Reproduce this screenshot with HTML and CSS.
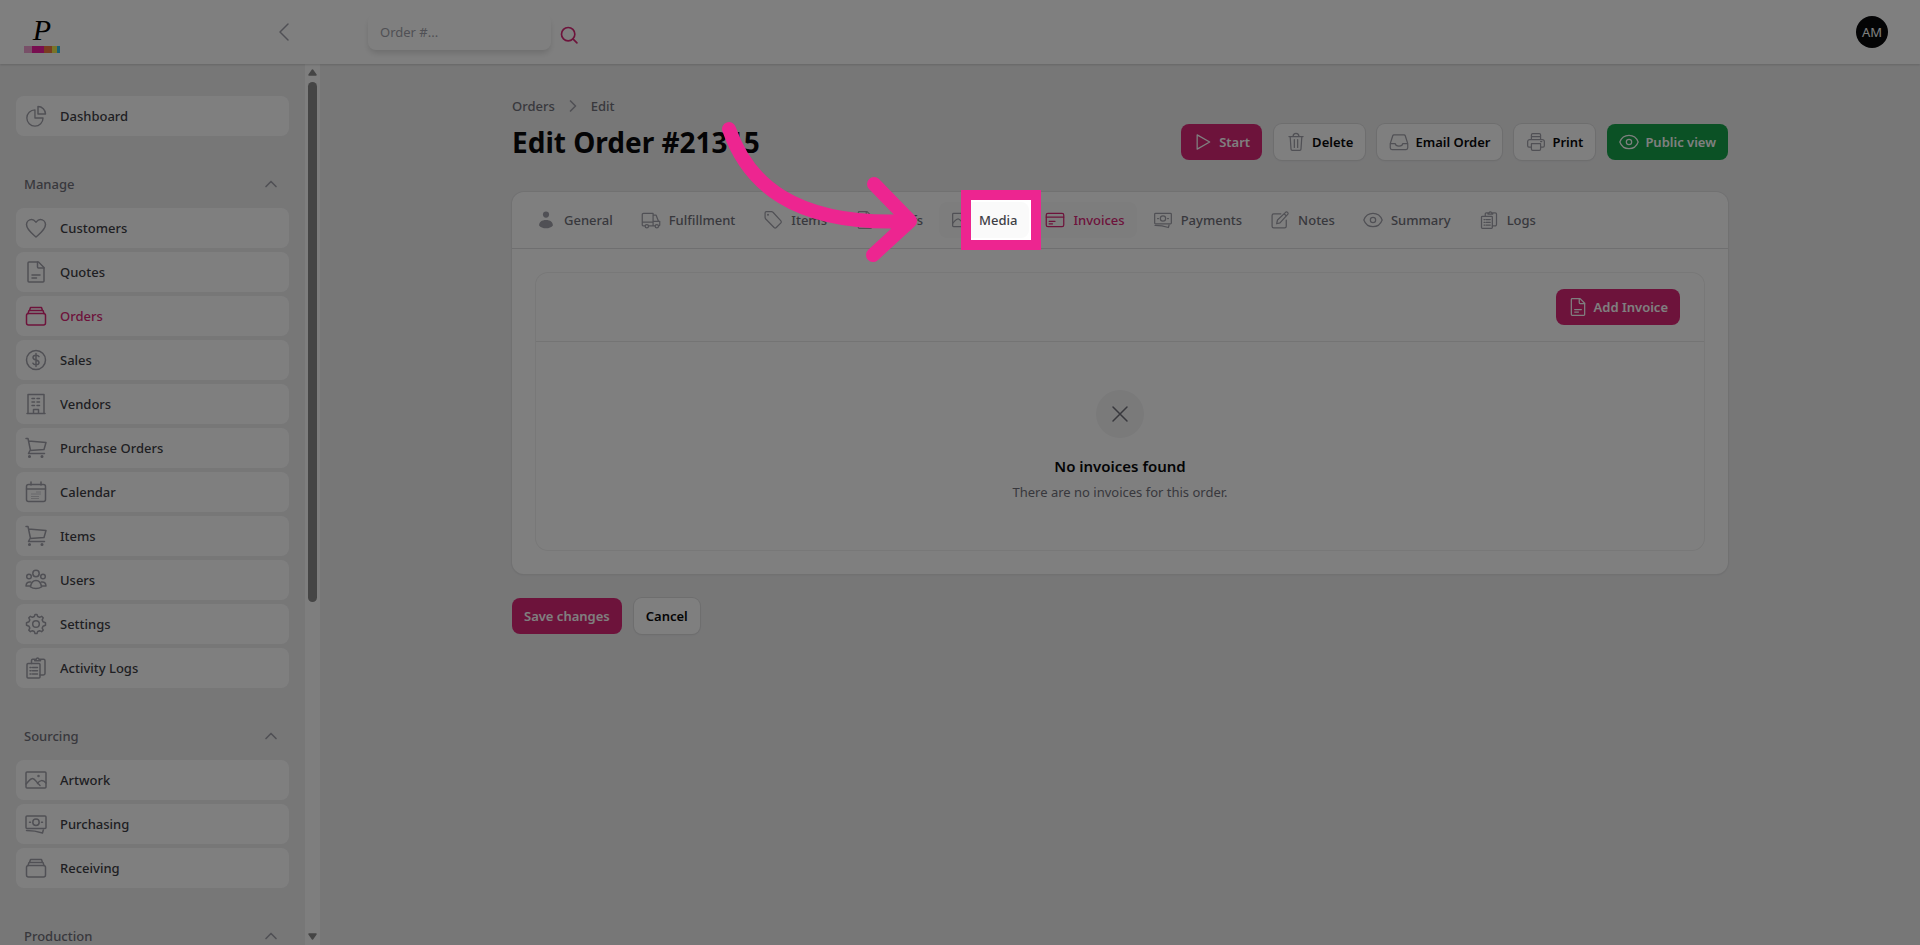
FILE: index.html
```html
<!DOCTYPE html>
<html lang="en">
<head>
    <meta charset="utf-8">
    <title>Edit Order #21315</title>
    <link rel="stylesheet" href="styles.css">
</head>
<body>
    <!-- icon set -->
    <svg class="sprite" aria-hidden="true">
        <symbol id="i-pie" viewBox="0 0 24 24"><path d="M10.500 4.500A9 9 0 1 0 19.500 13.500h-9z" transform="translate(1.500 1.800) scale(.9)"/><path d="M14 2.500v7.500h7.500A7.500 7.500 0 0 0 14 2.500z"/></symbol>
        <symbol id="i-heart" viewBox="0 0 24 24"><path d="M12 21C8 17.500 2.500 13.500 2.500 8.500A5.200 5.200 0 0 1 7.700 3.500C9.800 3.500 11 5 12 6.200 13 5 14.200 3.500 16.300 3.500a5.200 5.200 0 0 1 5.200 5c0 5-5.500 9-9.500 12.500z"/></symbol>
        <symbol id="i-doc" viewBox="0 0 24 24"><path d="M5 2h9.500L20 7.500V21a1 1 0 0 1-1 1H5a1 1 0 0 1-1-1V3a1 1 0 0 1 1-1z"/><path d="M13.500 2v5a1 1 0 0 0 1 1H20M8 15h8M8 18h4.500"/></symbol>
        <symbol id="i-stack" viewBox="0 0 24 24"><rect x="2.500" y="9.500" width="19" height="11.500" rx="2"/><path d="M4 9.500 5 6.500h14l1 3M5.500 6.500 6.500 3.500h11l1 3"/></symbol>
        <symbol id="i-dollar" viewBox="0 0 24 24"><circle cx="12" cy="12" r="9.500"/><path d="M15 8.700C14.500 7.700 13.500 7.200 12 7.200c-1.800 0-3 .9-3 2.300 0 3.300 6 1.700 6 5 0 1.400-1.200 2.300-3 2.300-1.500 0-2.600-.6-3.100-1.600M12 5.500v13"/></symbol>
        <symbol id="i-building" viewBox="0 0 24 24"><path d="M4 21.500V2.500h16v19M3 21.500h18M9.500 21.500V17.500h5v4M8 6.500h2.500M13 6.500h2.500M8 10h2.500M13 10h2.500M8 13.500h2.500M13 13.500h2.500"/></symbol>
        <symbol id="i-cart" viewBox="0 0 24 24"><path d="M2 2.500h2L6.500 14.500M4.500 5 22 6.500 20 13.500 6 14.500 4.500 17.500H20.500"/><circle cx="5.500" cy="20.500" r=".8"/><circle cx="18" cy="20.500" r=".8"/></symbol>
        <symbol id="i-calendar" viewBox="0 0 24 24"><rect x="2.500" y="4.500" width="19" height="17" rx="2"/><path d="M2.500 9h19M7 2v3M17 2v3"/><path d="M7.500 16.500h7M7.500 14h9.500M7.500 18.500h7M12.500 12h4.500" stroke-width="1" stroke-linecap="butt" stroke-dasharray="1 1"/></symbol>
        <symbol id="i-users" viewBox="0 0 24 24"><circle cx="12" cy="5.500" r="3.200"/><circle cx="5" cy="8.500" r="2.300"/><circle cx="19" cy="8.500" r="2.300"/><path d="M6.500 19c.5-4 2.500-6.500 5.500-6.500s5 2.500 5.500 6.500c-3 2-8 2-11 0zM6.500 14C4 13.500 2.200 15 2 18h4M17.500 14c2.500-.5 4.300 1 4.500 4h-4"/></symbol>
        <symbol id="i-gear" viewBox="0 0 24 24"><circle cx="12" cy="12" r="3.300"/><path d="M10.300 4.500 11 2.500h2l.7 2 1.900.8 2-1 1.600 1.600-1 2 .8 1.900 2.500.9v2.600l-2.500.9-.8 1.900 1 2-1.600 1.600-2-1-1.900.8-.7 2h-2l-.7-2-1.900-.8-2 1-1.600-1.600 1-2-.8-1.900-2.500-.9v-2.600l2.500-.9.8-1.900-1-2 1.600-1.600 2 1z"/></symbol>
        <symbol id="i-logs" viewBox="0 0 24 24"><rect x="3" y="7.500" width="13" height="14.500" rx="1"/><path d="M7.500 7.500V4.500a1.200 1.200 0 0 1 1.200-1.200h2M16.500 3.300h3A1.500 1.500 0 0 1 21 4.800v12.500a1.800 1.800 0 0 1-1.800 1.800H16M10.700 4.800V3.300h1.500c.5-1.600 2.300-1.600 2.800 0h1.500v1.500zM6 11.500h1M8.500 11.500h5M6 14.800h1M8.500 14.800h5M6 18h1M8.500 18h5"/></symbol>
        <symbol id="i-image" viewBox="0 0 24 24"><rect x="2" y="4" width="20" height="16" rx="1"/><path d="M2 16c3-3 4-5.500 6.500-5.500S12 14 16 17.500M13.500 15.500c2-3.500 5.500-4 8.500-.5"/><circle cx="14.500" cy="8" r=".5"/></symbol>
        <symbol id="i-cash" viewBox="0 0 24 24"><rect x="2" y="4" width="20" height="12.500" rx="1"/><circle cx="12" cy="10.200" r="3.200"/><path d="M5.500 10.200h1M17.500 10.200h1M2.500 18.500c6 0 10 .5 16 2.500l.8-3"/></symbol>
        <symbol id="i-user" viewBox="0 0 24 24"><circle cx="12" cy="5.500" r="3.700" fill="currentColor" stroke="none"/><path d="M3.700 18.500c0-4 3-6.500 8.300-6.500s8.300 2.500 8.300 6.500c-3 4.500-13.600 4.500-16.600 0z" fill="currentColor" stroke="none"/></symbol>
        <symbol id="i-truck" viewBox="0 0 24 24"><path d="M5 19H2.500a1 1 0 0 1-1-1V5.500a1.500 1.500 0 0 1 1.500-1.500h11.500v15H9M14.500 6h3.500l3 7.500h1.500V18a1 1 0 0 1-1 1M14.500 13.500H22M1.500 14.500h13M14.500 19H17"/><circle cx="7" cy="19.500" r="2"/><circle cx="19" cy="19.500" r="2"/></symbol>
        <symbol id="i-tag" viewBox="0 0 24 24"><path d="M2.500 3.500A1.500 1.500 0 0 1 4 2h6.500l1.500.7 9.500 10.300a2 2 0 0 1 0 2.500l-5.500 5.500a2 2 0 0 1-2.700 0L3 10.500l-.5-1.500z"/><circle cx="6" cy="5.700" r=".5"/></symbol>
        <symbol id="i-card" viewBox="0 0 24 24"><rect x="1.500" y="4" width="21" height="16" rx="2"/><path d="M1.500 8.500h21M5 13.500h7M5 16.500h4"/></symbol>
        <symbol id="i-edit" viewBox="0 0 24 24"><path d="M13 4.500H4.500A2 2 0 0 0 2.500 6.500v13a2 2 0 0 0 2 2h13a2 2 0 0 0 2-2V12M8 16.500l1-4.500L19 2.500c1.300-1 3.500 1 2.500 2.500L12 15.500zM17 4.500l2.500 2.500"/></symbol>
        <symbol id="i-eye" viewBox="0 0 24 24"><path d="M1 12C3 6.500 7 4 12 4S21 6.500 23 12C21 17.500 17 20 12 20S3 17.500 1 12z"/><circle cx="12" cy="12" r="3.200"/></symbol>
        <symbol id="i-play" viewBox="0 0 24 24"><path d="M5 3.500 20 12 5 20.500z"/></symbol>
        <symbol id="i-trash" viewBox="0 0 24 24"><path d="M3.500 5.500h17M5 5.500l1 15a1.500 1.500 0 0 0 1.500 1.500h9a1.500 1.500 0 0 0 1.500-1.500l1-15M8.500 5.500c0-5 7-5 7 0M10 9v9.500M14 9v9.500"/></symbol>
        <symbol id="i-inbox" viewBox="0 0 24 24"><path d="M1.500 14 4.500 4.500a1.500 1.500 0 0 1 1.500-1h12a1.500 1.500 0 0 1 1.500 1l3 9.500v5a2 2 0 0 1-2 2h-17a2 2 0 0 1-2-2zM1.500 14H7.500c.5 4 8.500 4 9 0h6"/></symbol>
        <symbol id="i-print" viewBox="0 0 24 24"><path d="M6.500 18H3.500a1.500 1.500 0 0 1-1.500-1.500v-5a2.500 2.500 0 0 1 2.500-2.500h15a2.500 2.500 0 0 1 2.500 2.500v5a1.500 1.500 0 0 1-1.500 1.500h-3M6.500 9V3.500a1.500 1.500 0 0 1 1.500-1.500h8a1.500 1.500 0 0 1 1.500 1.500V9M6.500 5.500h11M6.500 14h11v6.500a1.500 1.500 0 0 1-1.500 1.500H8a1.500 1.500 0 0 1-1.500-1.500zM17.500 11.500h1.500"/></symbol>
        <symbol id="i-up" viewBox="0 0 24 24"><path d="M6 15l6-6 6 6"/></symbol>
        <symbol id="i-left" viewBox="0 0 24 24"><path d="M16 4 8 12l8 8"/></symbol>
        <symbol id="i-right" viewBox="0 0 24 24"><path d="M9 6l6 6-6 6"/></symbol>
        <symbol id="i-search" viewBox="0 0 24 24"><circle cx="11" cy="11" r="8"/><path d="M17 17l4.500 4.500"/></symbol>
        <symbol id="i-x" viewBox="0 0 24 24"><path d="M5 5l14 14M19 5L5 19"/></symbol>
    </svg>

    <header class="topbar">
        <div class="brand">
            <a class="logo" href="#">
                <span class="logo-letter">P</span>
                <span class="logo-bar"><i class="c1"></i><i class="c2"></i><i class="c3"></i><i class="c4"></i><i class="c5"></i></span>
            </a>
            <button class="icon-button" aria-label="Collapse sidebar"><svg class="icon"><use href="#i-left"/></svg></button>
        </div>
        <form class="search">
            <input type="text" aria-label="Order number" placeholder="Order #...">
            <button class="icon-button pink" type="button" aria-label="Search"><svg class="icon-xs"><use href="#i-search"/></svg></button>
        </form>
        <button class="avatar">AM</button>
    </header>

    <div class="layout">
        <aside class="sidebar">
            <nav class="nav">
                <ul>
                    <li><a href="#"><svg class="icon"><use href="#i-pie"/></svg>Dashboard</a></li>
                </ul>
                <section>
                    <button class="group">Manage<svg class="icon-xs"><use href="#i-up"/></svg></button>
                    <ul>
                        <li><a href="#"><svg class="icon"><use href="#i-heart"/></svg>Customers</a></li>
                        <li><a href="#"><svg class="icon"><use href="#i-doc"/></svg>Quotes</a></li>
                        <li><a href="#" class="active"><svg class="icon"><use href="#i-stack"/></svg>Orders</a></li>
                        <li><a href="#"><svg class="icon"><use href="#i-dollar"/></svg>Sales</a></li>
                        <li><a href="#"><svg class="icon"><use href="#i-building"/></svg>Vendors</a></li>
                        <li><a href="#"><svg class="icon"><use href="#i-cart"/></svg>Purchase Orders</a></li>
                        <li><a href="#"><svg class="icon"><use href="#i-calendar"/></svg>Calendar</a></li>
                        <li><a href="#"><svg class="icon"><use href="#i-cart"/></svg>Items</a></li>
                        <li><a href="#"><svg class="icon"><use href="#i-users"/></svg>Users</a></li>
                        <li><a href="#"><svg class="icon"><use href="#i-gear"/></svg>Settings</a></li>
                        <li><a href="#"><svg class="icon"><use href="#i-logs"/></svg>Activity Logs</a></li>
                    </ul>
                </section>
                <section>
                    <button class="group">Sourcing<svg class="icon-xs"><use href="#i-up"/></svg></button>
                    <ul>
                        <li><a href="#"><svg class="icon"><use href="#i-image"/></svg>Artwork</a></li>
                        <li><a href="#"><svg class="icon"><use href="#i-cash"/></svg>Purchasing</a></li>
                        <li><a href="#"><svg class="icon"><use href="#i-stack"/></svg>Receiving</a></li>
                    </ul>
                </section>
                <section>
                    <button class="group">Production<svg class="icon-xs"><use href="#i-up"/></svg></button>
                </section>
            </nav>
            <div class="scrollbar" aria-hidden="true">
                <svg class="arrow" viewBox="0 0 9 7"><path d="M4.500 1 8 6H1z"/></svg>
                <div class="track"><div class="thumb"></div></div>
                <svg class="arrow" viewBox="0 0 9 7"><path d="M1 1h7L4.500 6z"/></svg>
            </div>
        </aside>

        <main class="content">
            <div class="page-head">
                <div>
                    <nav class="crumbs"><a href="#">Orders</a><svg class="icon-xs"><use href="#i-right"/></svg><a href="#">Edit</a></nav>
                    <h1>Edit Order #21315</h1>
                </div>
                <div class="actions">
                    <button class="btn primary"><svg class="icon-xs"><use href="#i-play"/></svg>Start</button>
                    <button class="btn"><svg class="icon-xs"><use href="#i-trash"/></svg>Delete</button>
                    <button class="btn"><svg class="icon-xs"><use href="#i-inbox"/></svg>Email Order</button>
                    <button class="btn"><svg class="icon-xs"><use href="#i-print"/></svg>Print</button>
                    <button class="btn success"><svg class="icon-xs"><use href="#i-eye"/></svg>Public view</button>
                </div>
            </div>

            <div class="card">
                <nav class="tabs">
                    <button class="tab"><svg class="icon-xs"><use href="#i-user"/></svg>General</button>
                    <button class="tab"><svg class="icon-xs"><use href="#i-truck"/></svg>Fulfillment</button>
                    <button class="tab"><svg class="icon-xs"><use href="#i-tag"/></svg>Items</button>
                    <button class="tab"><svg class="icon-xs"><use href="#i-doc"/></svg>Proofs</button>
                    <div class="tour-target">
                        <button class="tab hovered"><svg class="icon-xs"><use href="#i-image"/></svg>Media</button>
                        <div class="tour-box"></div>
                        <svg class="tour-arrow" viewBox="0 0 200 150"><path d="M8 8C26 60 70 106 189 100M153 63l36 37-37 34"/></svg>
                    </div>
                    <button class="tab active"><svg class="icon-xs"><use href="#i-card"/></svg>Invoices</button>
                    <button class="tab"><svg class="icon-xs"><use href="#i-cash"/></svg>Payments</button>
                    <button class="tab"><svg class="icon-xs"><use href="#i-edit"/></svg>Notes</button>
                    <button class="tab"><svg class="icon-xs"><use href="#i-eye"/></svg>Summary</button>
                    <button class="tab"><svg class="icon-xs"><use href="#i-logs"/></svg>Logs</button>
                </nav>
                <div class="panel">
                    <div class="panel-head">
                        <button class="btn primary"><svg class="icon-xs"><use href="#i-doc"/></svg>Add Invoice</button>
                    </div>
                    <div class="empty">
                        <div class="empty-icon"><svg class="icon"><use href="#i-x"/></svg></div>
                        <h2>No invoices found</h2>
                        <p>There are no invoices for this order.</p>
                    </div>
                </div>
            </div>

            <div class="form-actions">
                <button class="btn primary">Save changes</button>
                <button class="btn">Cancel</button>
            </div>
        </main>
    </div>
</body>
</html>
```
FILE: styles.css
```css
* {
    box-sizing: border-box;
}
body {
    margin: 0;
    height: 100vh;
    display: flex;
    flex-direction: column;
    overflow: hidden;
    background-color: #eeeeef;
    color: #09090b;
    font-family: "Noto Sans", "Open Sans", sans-serif;
    font-size: 13px;
    line-height: 20px;
}
h1, h2, p, ul {
    margin: 0;
    padding: 0;
}
ul {
    list-style: none;
}
a {
    color: inherit;
    text-decoration: none;
}
button {
    border: 0;
    padding: 0;
    background: none;
    color: inherit;
    font: inherit;
    cursor: pointer;
}
svg {
    flex: none;
    fill: none;
    stroke: currentColor;
    stroke-width: 1.5;
    stroke-linecap: round;
    stroke-linejoin: round;
}
.sprite {
    position: absolute;
    width: 0;
    height: 0;
}
.icon {
    width: 24px;
    height: 24px;
}
.icon-xs {
    width: 20px;
    height: 20px;
}

/* top bar */
.topbar {
    flex: none;
    height: 64px;
    display: flex;
    align-items: center;
    padding-right: 32px;
    background-color: #fff;
    box-shadow: 0 1px 2px rgba(0, 0, 0, 0.15);
    z-index: 1;
}
.brand {
    width: 320px;
    display: flex;
    align-items: center;
    justify-content: space-between;
    padding: 0 24px;
}
.logo {
    width: 36px;
    padding-top: 6px;
}
.logo-letter {
    display: block;
    height: 28px;
    text-align: center;
    font: italic 30px/24px "Liberation Serif", cursive;
    color: #000;
}
.logo-bar {
    display: flex;
    height: 7px;
}
.c1 { flex: 8; background-color: #f0a0d0; }
.c2 { flex: 12; background-color: #f01ca0; }
.c3 { flex: 8; background-color: #f07840; }
.c4 { flex: 5; background-color: #f0e850; }
.c5 { flex: 3; background-color: #30c0e8; }
.icon-button {
    display: flex;
    color: #a1a1aa;
}
.icon-button.pink {
    color: #db2777;
    padding-top: 6px;
}
.icon-button.pink svg {
    stroke-width: 2;
}
.search {
    display: flex;
    align-items: center;
    gap: 8px;
    margin-left: 48px;
}
.search input {
    width: 183px;
    height: 36px;
    padding: 0 12px;
    border: 0;
    border-radius: 8px;
    background-color: #fff;
    box-shadow: 0 4px 6px -1px rgba(0, 0, 0, 0.15);
    font: inherit;
}
.search input::placeholder {
    color: #a1a1aa;
}
.avatar {
    width: 32px;
    height: 32px;
    margin-left: auto;
    border-radius: 50%;
    background-color: #09090b;
    color: #fff;
}

/* sidebar */
.layout {
    flex: 1;
    min-height: 0;
    display: flex;
}
.sidebar {
    flex: none;
    width: 320px;
    display: flex;
    overflow: hidden;
}
.nav {
    flex: 1;
    display: flex;
    flex-direction: column;
    gap: 28px;
    padding: 32px 16px;
}
.nav ul {
    display: flex;
    flex-direction: column;
    gap: 4px;
}
.nav a {
    display: flex;
    align-items: center;
    gap: 12px;
    height: 40px;
    padding: 0 8px;
    border-radius: 8px;
    background-color: #fff;
    color: #3f3f46;
    font-weight: 500;
}
.nav a svg {
    color: #a1a1aa;
}
.nav a.active, .nav a.active svg {
    color: #db2777;
}
.group {
    width: 100%;
    height: 40px;
    margin-bottom: 4px;
    padding: 0 8px;
    display: flex;
    align-items: center;
    justify-content: space-between;
    color: #71717a;
    font-weight: 500;
}
.group svg {
    stroke-width: 2;
    color: #a1a1aa;
}
.scrollbar {
    width: 15px;
    display: flex;
    flex-direction: column;
    align-items: center;
    padding: 5px 0;
    background-color: #fcfcfc;
}
.arrow {
    width: 9px;
    height: 7px;
    fill: #8b8b8b;
    stroke: #8b8b8b;
}
.track {
    flex: 1;
    padding: 6px 0;
}
.thumb {
    width: 9px;
    height: 61.5%;
    border-radius: 5px;
    background-color: #8b8b8b;
}

/* page */
.content {
    flex: 1;
    max-width: 1280px;
    margin: 0 auto;
    padding: 32px;
}
.page-head {
    display: flex;
    align-items: flex-end;
    justify-content: space-between;
    margin-bottom: 32px;
}
.crumbs {
    display: flex;
    align-items: center;
    gap: 8px;
    margin-bottom: 8px;
    color: #71717a;
    font-weight: 500;
}
.crumbs svg {
    stroke-width: 2;
    color: #a1a1aa;
}
h1 {
    font-size: 28px;
    line-height: 36px;
    font-weight: 700;
}
.actions, .form-actions {
    display: flex;
    gap: 12px;
}
.btn {
    display: flex;
    align-items: center;
    gap: 6px;
    height: 36px;
    padding: 0 12px;
    border-radius: 8px;
    background-color: #fff;
    box-shadow: 0 0 0 1px #dcdcdd, 0 1px 2px rgba(0, 0, 0, 0.08);
    font-weight: 600;
}
.btn svg {
    color: #a1a1aa;
}
.btn.primary, .btn.success {
    color: #fff;
    box-shadow: none;
}
.btn.primary {
    background-color: #db2777;
}
.btn.success {
    background-color: #16a34a;
}
.btn.primary svg, .btn.success svg {
    color: #fff;
}
.card {
    padding-bottom: 24px;
    border-radius: 12px;
    background-color: #fff;
    box-shadow: 0 0 0 1px #e2e2e3, 0 1px 2px rgba(0, 0, 0, 0.1);
}
.tabs {
    display: flex;
    gap: 4px;
    padding: 10px 12px;
    border-bottom: 1px solid #dfdfe0;
}
.tab {
    display: flex;
    align-items: center;
    gap: 8px;
    height: 36px;
    padding: 0 12px;
    border-radius: 8px;
    color: #71717a;
    font-weight: 500;
}
.tab svg {
    color: #a1a1aa;
}
.tab.hovered, .tab.active {
    background-color: #fafafa;
}
.tab.hovered {
    color: #3f3f46;
}
.tab.active, .tab.active svg {
    color: #db2777;
}
.panel {
    margin: 24px 24px 0;
    border-radius: 12px;
    box-shadow: 0 0 0 1px #f0f0f0;
}
.panel-head {
    display: flex;
    justify-content: flex-end;
    padding: 16px 24px;
    border-bottom: 1px solid #e8e8e9;
}
.empty {
    display: flex;
    flex-direction: column;
    align-items: center;
    padding: 48px 24px;
}
.empty-icon {
    display: flex;
    padding: 12px;
    margin-bottom: 16px;
    border-radius: 50%;
    background-color: #f4f4f5;
    color: #71717a;
}
h2 {
    font-size: 15px;
    line-height: 24px;
    font-weight: 600;
}
.empty p {
    margin-top: 4px;
    color: #71717a;
}
.form-actions {
    margin-top: 24px;
}

/* guided tour: spotlight on one tab, everything else dimmed */
.tour-target {
    position: relative;
}
.tour-box {
    position: absolute;
    z-index: 10;
    top: -12px;
    left: 22px;
    width: 80px;
    height: 60px;
    border: 10px solid #ed2590;
    box-shadow: 0 0 0 200vmax rgba(0, 0, 0, 0.5);
    pointer-events: none;
}
.tour-arrow {
    position: absolute;
    z-index: 11;
    top: -81px;
    left: -218px;
    width: 200px;
    height: 150px;
    stroke: #ed2590;
    stroke-width: 14;
    pointer-events: none;
}
```
